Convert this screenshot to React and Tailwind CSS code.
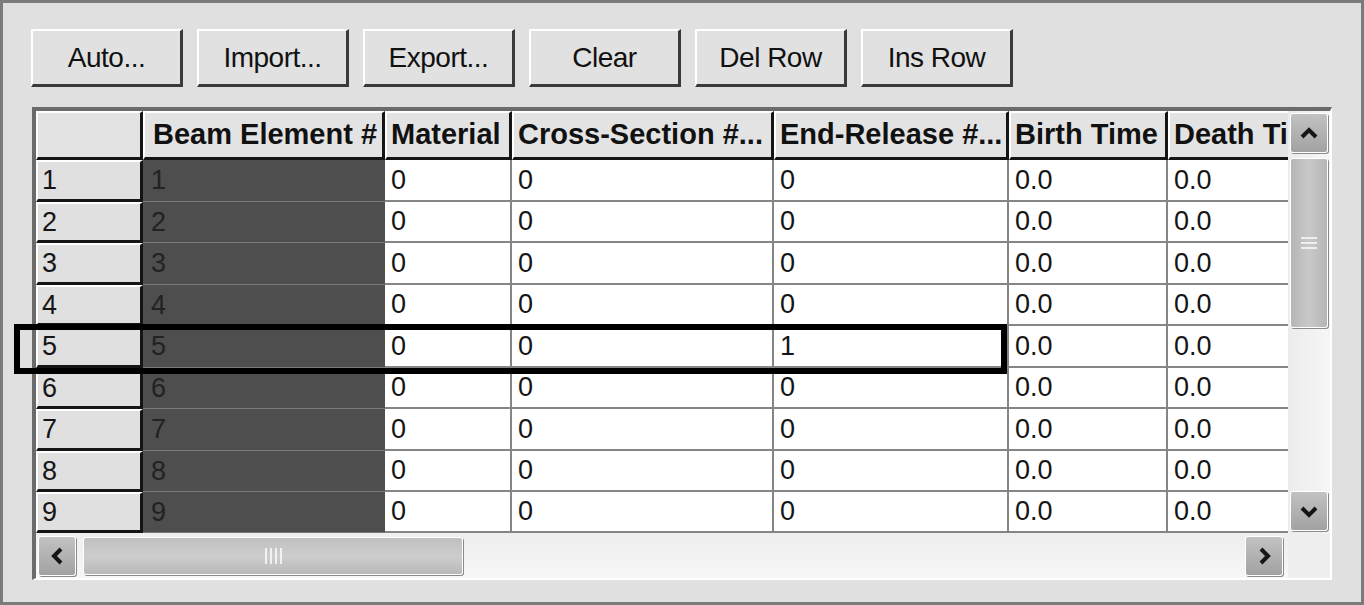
import React from 'react';

const font = { fontFamily: '"Liberation Sans", Arial, sans-serif' };

const buttons = ['Auto...', 'Import...', 'Export...', 'Clear', 'Del Row', 'Ins Row'];

// column definitions (outer widths in px)
const columns = [
  { key: 'mat', title: 'Material', w: 'w-[127px]' },
  { key: 'cs', title: 'Cross-Section #...', w: 'w-[262px]' },
  { key: 'er', title: 'End-Release #...', w: 'w-[235px]' },
  { key: 'bt', title: 'Birth Time', w: 'w-[159px]' },
  { key: 'dt', title: 'Death Time', w: 'w-[170px]' },
];

const rowHeights = ['h-[42px]', 'h-[41px]', 'h-[42px]', 'h-[41px]', 'h-[42px]', 'h-[41px]', 'h-[42px]', 'h-[41px]', 'h-[41px]'];

const rows = rowHeights.map((h, i) => ({
  n: i + 1,
  h,
  vals: ['0', '0', i === 4 ? '1' : '0', '0.0', '0.0'],
}));

const Chevron = ({ dir }) => {
  const pts = {
    up: '4,15 11,8 18,15',
    down: '4,8 11,15 18,8',
    left: '15,4 8,11 15,18',
    right: '8,4 15,11 8,18',
  }[dir];
  return (
    <svg width="22" height="22" viewBox="0 0 22 22">
      <polyline points={pts} fill="none" stroke="#151515" strokeWidth="4" strokeLinejoin="miter" />
    </svg>
  );
};

const ScrollBtn = ({ dir }) => (
  <div className="w-[38px] h-[40px] shrink-0 rounded-[3px] border border-white bg-gradient-to-b from-[#c2c2c2] to-[#a2a2a2] shadow-[1px_1px_0_#8a8a8a] flex items-center justify-center">
    <Chevron dir={dir} />
  </div>
);

const headCell = 'shrink-0 box-border bg-[#e3e3e3] border-t-2 border-l-2 border-white border-r-[3px] border-b-[3px] border-r-[#151515] border-b-[#151515] flex items-center text-[29px] font-bold whitespace-nowrap overflow-hidden text-[#111]';

export default function App() {
  return (
    <div style={font} className="relative w-[1364px] h-[605px] box-border border-[3px] border-[#7b7b7b] bg-[#e0e0e0] pl-[28px] pt-[26px] overflow-hidden text-black">
      {/* toolbar */}
      <div className="flex gap-[14px]">
        {buttons.map((b) => (
          <div
            key={b}
            className="w-[152px] h-[58px] box-border bg-[#e1e1e1] border-t-2 border-l-2 border-white border-r-[3px] border-b-[3px] border-r-[#3a3a3a] border-b-[#3a3a3a] flex items-center justify-center text-[28px] tracking-[-0.5px] text-[#111]"
          >
            {b}
          </div>
        ))}
      </div>

      {/* grid frame */}
      <div className="mt-[20px] ml-[1px] w-[1300px] box-border border-t-4 border-l-4 border-t-[#6b6b6b] border-l-[#6b6b6b] border-r-2 border-b-2 border-r-white border-b-white flex flex-col">
        <div className="flex">
          {/* table */}
          <div className="w-[1252px] overflow-hidden">
            {/* header */}
            <div className="flex h-[49px]">
              <div className={`w-[107px] ${headCell} bg-[#e0e0e0]`} />
              <div className={`w-[242px] ${headCell} pl-[8px]`}>Beam Element #</div>
              {columns.map((c) => (
                <div key={c.key} className={`${c.w} ${headCell} pl-[4px]`}>
                  {c.title}
                </div>
              ))}
            </div>
            {/* data rows */}
            {rows.map((r) => (
              <div key={r.n} className={`flex ${r.h}`}>
                <div className="w-[107px] shrink-0 box-border bg-[#e0e0e0] border-t-2 border-l-2 border-white border-r-[3px] border-b-[3px] border-r-[#151515] border-b-[#151515] pl-[4px] flex items-center text-[27px] text-[#151515]">
                  {r.n}
                </div>
                <div className="w-[242px] shrink-0 box-border bg-[#4e4e4e] border-b border-b-[#7a7a7a] pl-[8px] flex items-center text-[27px] text-[#222]">
                  {r.n}
                </div>
                {columns.map((c, j) => (
                  <div
                    key={c.key}
                    className={`${c.w} shrink-0 box-border bg-white border-r-2 border-b-2 border-[#858585] pl-[6px] flex items-center text-[27px] text-[#151515]`}
                  >
                    {r.vals[j]}
                  </div>
                ))}
              </div>
            ))}
          </div>

          {/* vertical scrollbar */}
          <div className="w-[42px] flex flex-col items-center pt-[2px] pb-[2px] bg-gradient-to-r from-[#ececec] to-[#f6f6f6]">
            <ScrollBtn dir="up" />
            <div className="mt-[5px] w-[38px] h-[170px] rounded-[3px] border border-white bg-gradient-to-r from-[#b5b5b5] via-[#c9c9c9] to-[#b5b5b5] shadow-[1px_1px_0_#8a8a8a] flex flex-col items-center justify-center gap-[3px]">
              <div className="w-[16px] h-[2px] bg-[#eeeeee]" />
              <div className="w-[16px] h-[2px] bg-[#eeeeee]" />
              <div className="w-[16px] h-[2px] bg-[#eeeeee]" />
            </div>
            <div className="flex-1" />
            <ScrollBtn dir="down" />
          </div>
        </div>

        {/* horizontal scrollbar row */}
        <div className="flex h-[45px]">
          <div className="w-[1252px] flex items-center pl-[2px] pr-[5px] bg-gradient-to-b from-[#eeeeee] to-[#f7f7f7]">
            <ScrollBtn dir="left" />
            <div className="ml-[7px] w-[380px] h-[38px] rounded-[3px] border border-white bg-gradient-to-b from-[#c0c0c0] via-[#cdcdcd] to-[#b9b9b9] shadow-[1px_1px_0_#8a8a8a] flex items-center justify-center gap-[3px]">
              <div className="w-[2px] h-[16px] bg-[#f2f2f2]" />
              <div className="w-[2px] h-[16px] bg-[#f2f2f2]" />
              <div className="w-[2px] h-[16px] bg-[#f2f2f2]" />
              <div className="w-[2px] h-[16px] bg-[#f2f2f2]" />
            </div>
            <div className="flex-1" />
            <ScrollBtn dir="right" />
          </div>
          <div className="w-[42px] bg-[#eeeeee]" />
        </div>
      </div>

      {/* highlight box over row 5 */}
      <div className="absolute left-[11px] top-[321px] w-[993px] h-[50px] border-[6px] border-black" />
    </div>
  );
}
